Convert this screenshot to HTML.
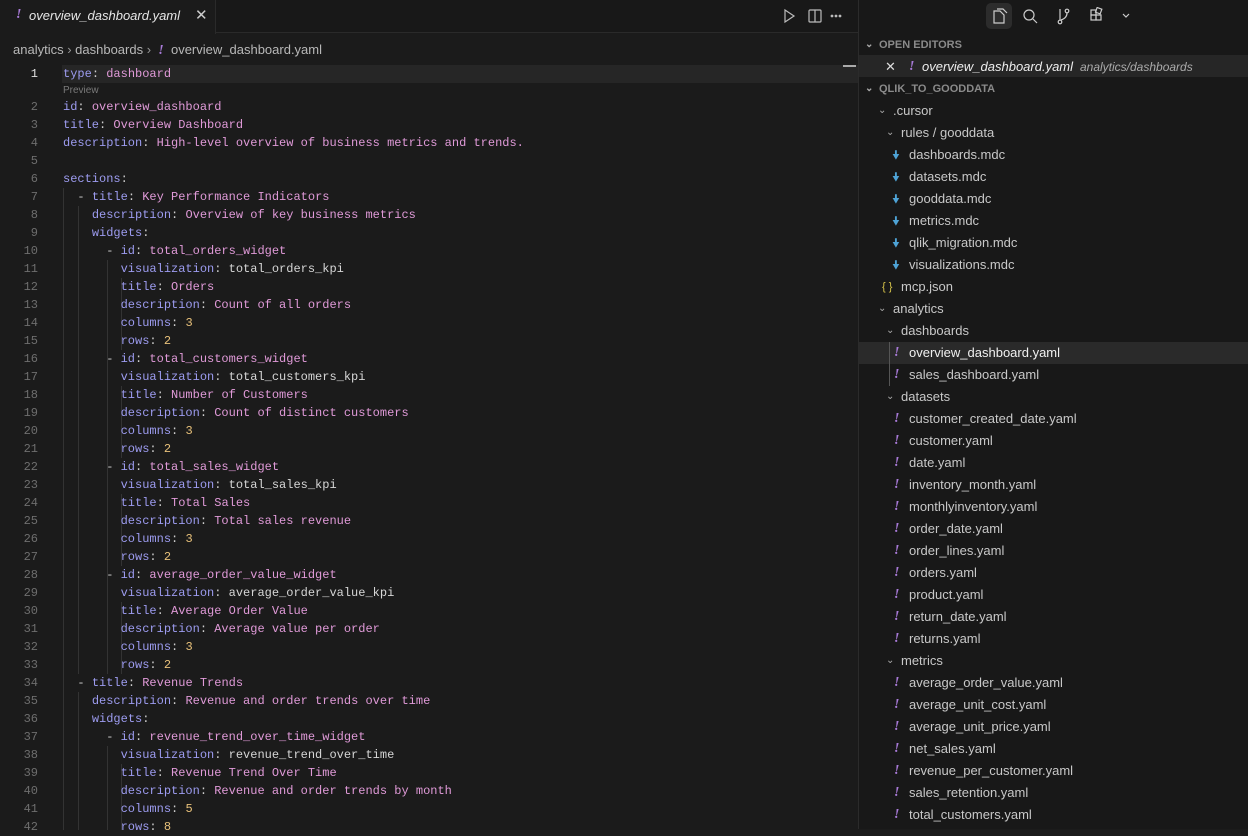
<!DOCTYPE html>
<html><head><meta charset="utf-8"><style>
*{margin:0;padding:0;box-sizing:border-box}
body{width:1248px;height:829px;background:#1b1b1b;overflow:hidden;position:relative;font-family:"Liberation Sans",sans-serif;color:#ccc}
.abs{position:absolute}
#tabs{left:0;top:0;width:858px;height:33px;background:#181818;border-bottom:1px solid #2a2a2a}
#tab{left:0;top:0;width:216px;height:34px;background:#1b1b1b;border-right:1px solid #2a2a2a}
#side{left:858px;top:0;width:390px;height:829px;background:#181818;border-left:1px solid #2b2b2b}
.code{font-family:"Liberation Mono",monospace;font-size:12px;white-space:pre;height:18px;line-height:18px}
.ln{position:absolute;left:0;width:38px;text-align:right;color:#6e6e6e;font-family:"Liberation Mono",monospace;font-size:12px;line-height:18px}
.k{color:#9d9cf0}.s{color:#e09ad8}.p{color:#d6d6d6}.n{color:#e8c17a}.c{color:#cfcfcf}
.g{position:absolute;width:1px;background:#333}
.row{position:absolute;left:0;width:390px;height:22px;line-height:22px;font-size:13px;color:#c8c8c8;white-space:nowrap}
.ex{color:#a97bd9;font-style:italic;font-weight:bold;font-family:"Liberation Serif",serif;font-size:14px}
.chev{position:absolute;font-size:10px;color:#aaa}
</style></head><body>
<div id="tabs" class="abs"></div>
<div id="tab" class="abs">
 <span class="abs ex" style="left:16px;top:7px">!</span>
 <span class="abs" style="left:29px;top:8px;font-size:13px;font-style:italic;color:#e6e6e6">overview_dashboard.yaml</span>
 <span class="abs" style="left:195px;top:6px;font-size:15px;color:#ccc">✕</span>
</div>
<svg class="abs" style="left:782px;top:8px" width="60" height="16" viewBox="0 0 60 16" fill="none" stroke="#bbb" stroke-width="1.2">
 <path d="M3 2 L12 8 L3 14 Z"/><rect x="27" y="2" width="12" height="12" rx="1"/><path d="M33 2 V14"/>
 <circle cx="50" cy="8" r=".8" fill="#bbb"/><circle cx="54" cy="8" r=".8" fill="#bbb"/><circle cx="58" cy="8" r=".8" fill="#bbb"/>
</svg>
<div class="abs" style="left:13px;top:42px;font-size:13px;color:#b8b8b8;white-space:nowrap">analytics <span style="color:#999">›</span> dashboards <span style="color:#999">›</span> &nbsp;<span class="ex">!</span>&nbsp; overview_dashboard.yaml</div>
<div class="abs" style="left:62px;top:65px;width:796px;height:18px;background:#262626"></div>
<div class="abs" style="left:843px;top:65px;width:13px;height:2px;background:#aaa"></div>
<div class="ln" style="top:65px;color:#e0e0e0">1</div>
<div class="abs code" style="left:63px;top:65px"><span class="k">type</span><span class="c">: </span><span class="s">dashboard</span></div>
<div class="abs" style="left:63px;top:85px;font-size:10px;color:#7a7a7a">Preview</div>
<div class="g" style="left:63px;top:188px;height:642px"></div>
<div class="g" style="left:78px;top:206px;height:468px"></div>
<div class="g" style="left:78px;top:692px;height:138px"></div>
<div class="g" style="left:107px;top:260px;height:414px"></div>
<div class="g" style="left:107px;top:746px;height:84px"></div>
<div class="g" style="left:121px;top:278px;height:72px"></div>
<div class="g" style="left:121px;top:386px;height:72px"></div>
<div class="g" style="left:121px;top:494px;height:72px"></div>
<div class="g" style="left:121px;top:602px;height:72px"></div>
<div class="g" style="left:121px;top:764px;height:66px"></div>
<div id="code"></div>
<script>
var L=[
["k:id","c:: ","s:overview_dashboard"],
["k:title","c:: ","s:Overview Dashboard"],
["k:description","c:: ","s:High-level overview of business metrics and trends."],
[],
["k:sections","c::"],
["c:  - ","k:title","c:: ","s:Key Performance Indicators"],
["c:    ","k:description","c:: ","s:Overview of key business metrics"],
["c:    ","k:widgets","c::"]];
function w(id,vis,t,d,c,r){return [["c:      - ","k:id","c:: ","s:"+id],["c:        ","k:visualization","c:: ","p:"+vis],["c:        ","k:title","c:: ","s:"+t],["c:        ","k:description","c:: ","s:"+d],["c:        ","k:columns","c:: ","n:"+c],["c:        ","k:rows","c:: ","n:"+r]];}
L=L.concat(w("total_orders_widget","total_orders_kpi","Orders","Count of all orders",3,2));
L=L.concat(w("total_customers_widget","total_customers_kpi","Number of Customers","Count of distinct customers",3,2));
L=L.concat(w("total_sales_widget","total_sales_kpi","Total Sales","Total sales revenue",3,2));
L=L.concat(w("average_order_value_widget","average_order_value_kpi","Average Order Value","Average value per order",3,2));
L.push(["c:  - ","k:title","c:: ","s:Revenue Trends"]);
L.push(["c:    ","k:description","c:: ","s:Revenue and order trends over time"]);
L.push(["c:    ","k:widgets","c::"]);
L=L.concat(w("revenue_trend_over_time_widget","revenue_trend_over_time","Revenue Trend Over Time","Revenue and order trends by month",5,8));
var h="";
for(var i=0;i<L.length;i++){var y=98+i*18;h+='<div class="ln" style="top:'+y+'px">'+(i+2)+'</div><div class="abs code" style="left:63px;top:'+y+'px">';
L[i].forEach(function(t){var j=t.indexOf(':');h+='<span class="'+t.slice(0,j)+'">'+t.slice(j+1)+'</span>';});h+='</div>';}
document.getElementById('code').innerHTML=h;
</script>
<div id="side" class="abs">
 <div class="abs" style="left:127px;top:3px;width:26px;height:26px;background:#2c2c2c;border-radius:5px"></div>
 <svg class="abs" style="left:131px;top:7px" width="140" height="18" viewBox="0 0 140 18" fill="none" stroke="#ccc" stroke-width="1.2">
  <path d="M4 4 h6 l4 4 v8 h-10 z M7 2 h6 l4 4"/>
  <circle cx="39" cy="8" r="5"/><path d="M43 12 L47 16"/>
  <circle cx="70" cy="15" r="1.8"/><path d="M70 13 V2"/><circle cx="77" cy="4" r="1.8"/><path d="M77 6 Q77 11 71 13"/>
  <rect x="101" y="8" width="5" height="5"/><rect x="106" y="8" width="5" height="5"/><rect x="101" y="3" width="5" height="5"/><rect x="106" y="1" width="5" height="5" transform="rotate(20 108 4)"/>
  <path d="M133 7 l3 3 l3 -3"/>
 </svg>
 <div class="row" style="top:34px;font-size:11px;font-weight:bold;color:#8a8a8a"><span class="chev" style="left:6px">⌄</span><span style="position:absolute;left:20px">OPEN EDITORS</span></div>
 <div class="row" style="top:55px;background:#262626;line-height:24px"><span style="position:absolute;left:26px;color:#ddd">✕</span><span class="ex" style="position:absolute;left:50px">!</span><span style="position:absolute;left:63px;font-style:italic;color:#eee">overview_dashboard.yaml <span style="font-size:12px;color:#aaa">&nbsp;analytics/dashboards</span></span></div>
 <div class="row" style="top:78px;font-size:11px;font-weight:bold;color:#8a8a8a"><span class="chev" style="left:6px">⌄</span><span style="position:absolute;left:20px">QLIK_TO_GOODDATA</span></div>
 <div id="tree"></div>
</div>
<script>
var T=[["c",19,34,".cursor"],["c",27,42,"rules / gooddata"],
["m",33,50,"dashboards.mdc"],["m",33,50,"datasets.mdc"],["m",33,50,"gooddata.mdc"],["m",33,50,"metrics.mdc"],["m",33,50,"qlik_migration.mdc"],["m",33,50,"visualizations.mdc"],
["j",23,42,"mcp.json"],["c",19,34,"analytics"],["c",27,42,"dashboards"],
["y",35,50,"overview_dashboard.yaml",1],["y",35,50,"sales_dashboard.yaml"],["c",27,42,"datasets"]];
["customer_created_date.yaml","customer.yaml","date.yaml","inventory_month.yaml","monthlyinventory.yaml","order_date.yaml","order_lines.yaml","orders.yaml","product.yaml","return_date.yaml","returns.yaml"].forEach(function(f){T.push(["y",35,50,f])});
T.push(["c",27,42,"metrics"]);
["average_order_value.yaml","average_unit_cost.yaml","average_unit_price.yaml","net_sales.yaml","revenue_per_customer.yaml","sales_retention.yaml","total_customers.yaml"].forEach(function(f){T.push(["y",35,50,f])});
var s="";T.forEach(function(t,i){var y=100+i*22;var bg=t[4]?"background:#2a2a2a;":"";var col=t[4]?"#f0f0f0":"#c8c8c8";
var ic=t[0]=="c"?'<span class="chev" style="left:'+t[1]+'px">⌄</span>':t[0]=="m"?'<span style="position:absolute;left:'+t[1]+'px;color:#4ea3d6;font-size:12px">🠟</span>':t[0]=="j"?'<span style="position:absolute;left:'+t[1]+'px;color:#d6c34a;font-size:11px">{ }</span>':'<span class="ex" style="position:absolute;left:'+t[1]+'px">!</span>';
s+='<div class="row" style="top:'+y+'px;'+bg+'">'+ic+'<span style="position:absolute;left:'+t[2]+'px;color:'+col+'">'+t[3]+'</span></div>';});
document.getElementById('tree').innerHTML=s+'<div style="position:absolute;left:30px;top:342px;width:1px;height:44px;background:#555"></div>';
</script>
</body></html>
